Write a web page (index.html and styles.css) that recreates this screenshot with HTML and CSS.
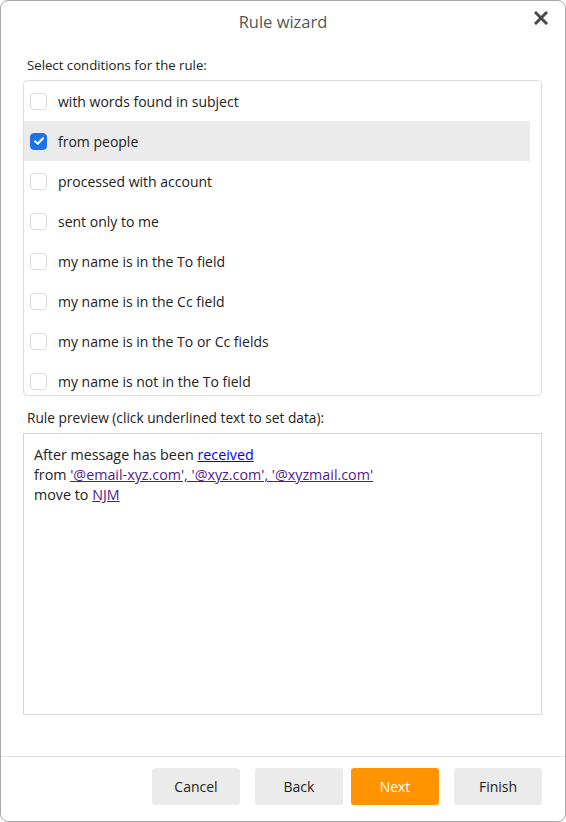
FILE: index.html
```html
<!DOCTYPE html>
<html>
<head>
<meta charset="utf-8">
<link rel="stylesheet" href="styles.css">
</head>
<body>
<div class="dialog">
  <header class="titlebar">
    <span class="title">Rule wizard</span>
    <button class="close" aria-label="Close">
      <svg width="14" height="14" viewBox="0 0 14 14"><path d="M2 2L12 12M12 2L2 12" stroke="#4a4a4a" stroke-width="3" stroke-linecap="square"/></svg>
    </button>
  </header>
  <main class="content">
    <div class="label">Select conditions for the rule:</div>
    <div class="listbox">
      <ul class="list">
        <li class="item"><span class="cb"></span>with words found in subject</li>
        <li class="item selected"><span class="cb checked"><svg width="10" height="8" viewBox="0 0 10 8"><path d="M1 4.2L3.8 6.8L9 1.2" stroke="#fff" stroke-width="2" fill="none" stroke-linecap="round" stroke-linejoin="round"/></svg></span>from people</li>
        <li class="item"><span class="cb"></span>processed with account</li>
        <li class="item"><span class="cb"></span>sent only to me</li>
        <li class="item"><span class="cb"></span>my name is in the To field</li>
        <li class="item"><span class="cb"></span>my name is in the Cc field</li>
        <li class="item"><span class="cb"></span>my name is in the To or Cc fields</li>
        <li class="item"><span class="cb"></span>my name is not in the To field</li>
      </ul>
    </div>
    <div class="label label2">Rule preview (click underlined text to set data):</div>
    <div class="preview">
      <div>After message has been <a class="link">received</a></div>
      <div>from <a class="link visited">'@email-xyz.com', '@xyz.com', '@xyzmail.com'</a></div>
      <div>move to <a class="link visited">NJM</a></div>
    </div>
  </main>
  <footer class="footer">
    <button class="btn">Cancel</button>
    <button class="btn btn-back">Back</button>
    <button class="btn primary">Next</button>
    <button class="btn btn-finish">Finish</button>
  </footer>
</div>
</body>
</html>
```
FILE: styles.css
```css
* { box-sizing: border-box; }
html, body { margin: 0; padding: 0; background: #fff; }
body {
  font-family: "Open Sans", "Noto Sans", sans-serif;
  font-size: 14px;
  color: #222;
}
.dialog {
  width: 566px;
  height: 822px;
  border: 1px solid #aaa;
  border-radius: 8px;
  display: flex;
  flex-direction: column;
  overflow: hidden;
}
.titlebar {
  height: 42px;
  display: flex;
  align-items: center;
  justify-content: center;
  position: relative;
}
.title {
  font-size: 16.5px;
  color: #555;
  margin-top: -2px;
}
.close {
  position: absolute;
  right: 17px;
  top: 10px;
  width: 14px;
  height: 14px;
  padding: 0;
  border: 0;
  background: none;
  display: flex;
}
.content {
  flex: 1;
  padding: 12px 23px 0 22px;
  display: flex;
  flex-direction: column;
}
.label {
  padding-left: 4px;
  line-height: 20px;
  color: #222;
  font-size: 13.2px;
}
.label2 { margin-top: 12px; font-size: 13.7px; }
.listbox {
  margin-top: 5px;
  height: 316px;
  border: 1px solid #ddd;
  border-radius: 4px;
  overflow: hidden;
  padding-right: 11px;
}
.list {
  list-style: none;
  margin: 0;
  padding: 0;
}
.item {
  height: 40px;
  display: flex;
  align-items: center;
  padding-left: 6px;
  gap: 11px;
}
.item.selected { background: #ebebeb; }
.cb {
  width: 17px;
  height: 17px;
  border: 1px solid #dcdcdc;
  border-radius: 4px;
  background: #fff;
  display: flex;
  align-items: center;
  justify-content: center;
  flex: none;
}
.cb.checked {
  background: #1a73e8;
  border-color: #1a73e8;
}
.preview {
  margin-top: 5px;
  height: 282px;
  border: 1px solid #d6d6d6;
  padding: 11px 10px 10px;
  line-height: 20px;
  font-size: 14.3px;
}
.link {
  color: #0000ee;
  text-decoration: underline;
  cursor: pointer;
}
.link.visited { color: #551a8b; }
.footer {
  height: 65px;
  border-top: 1px solid #e5e5e5;
  display: flex;
  justify-content: flex-end;
  align-items: flex-start;
  padding: 11px 23px 0 0;
}
.btn {
  width: 88px;
  height: 37px;
  border: 0;
  border-radius: 3px;
  background: #ebebeb;
  color: #222;
  font-family: inherit;
  font-size: 14px;
  margin-left: 15px;
}
.btn.primary {
  background: #ff9300;
  color: #fff;
  margin-left: 8px;
}
```
